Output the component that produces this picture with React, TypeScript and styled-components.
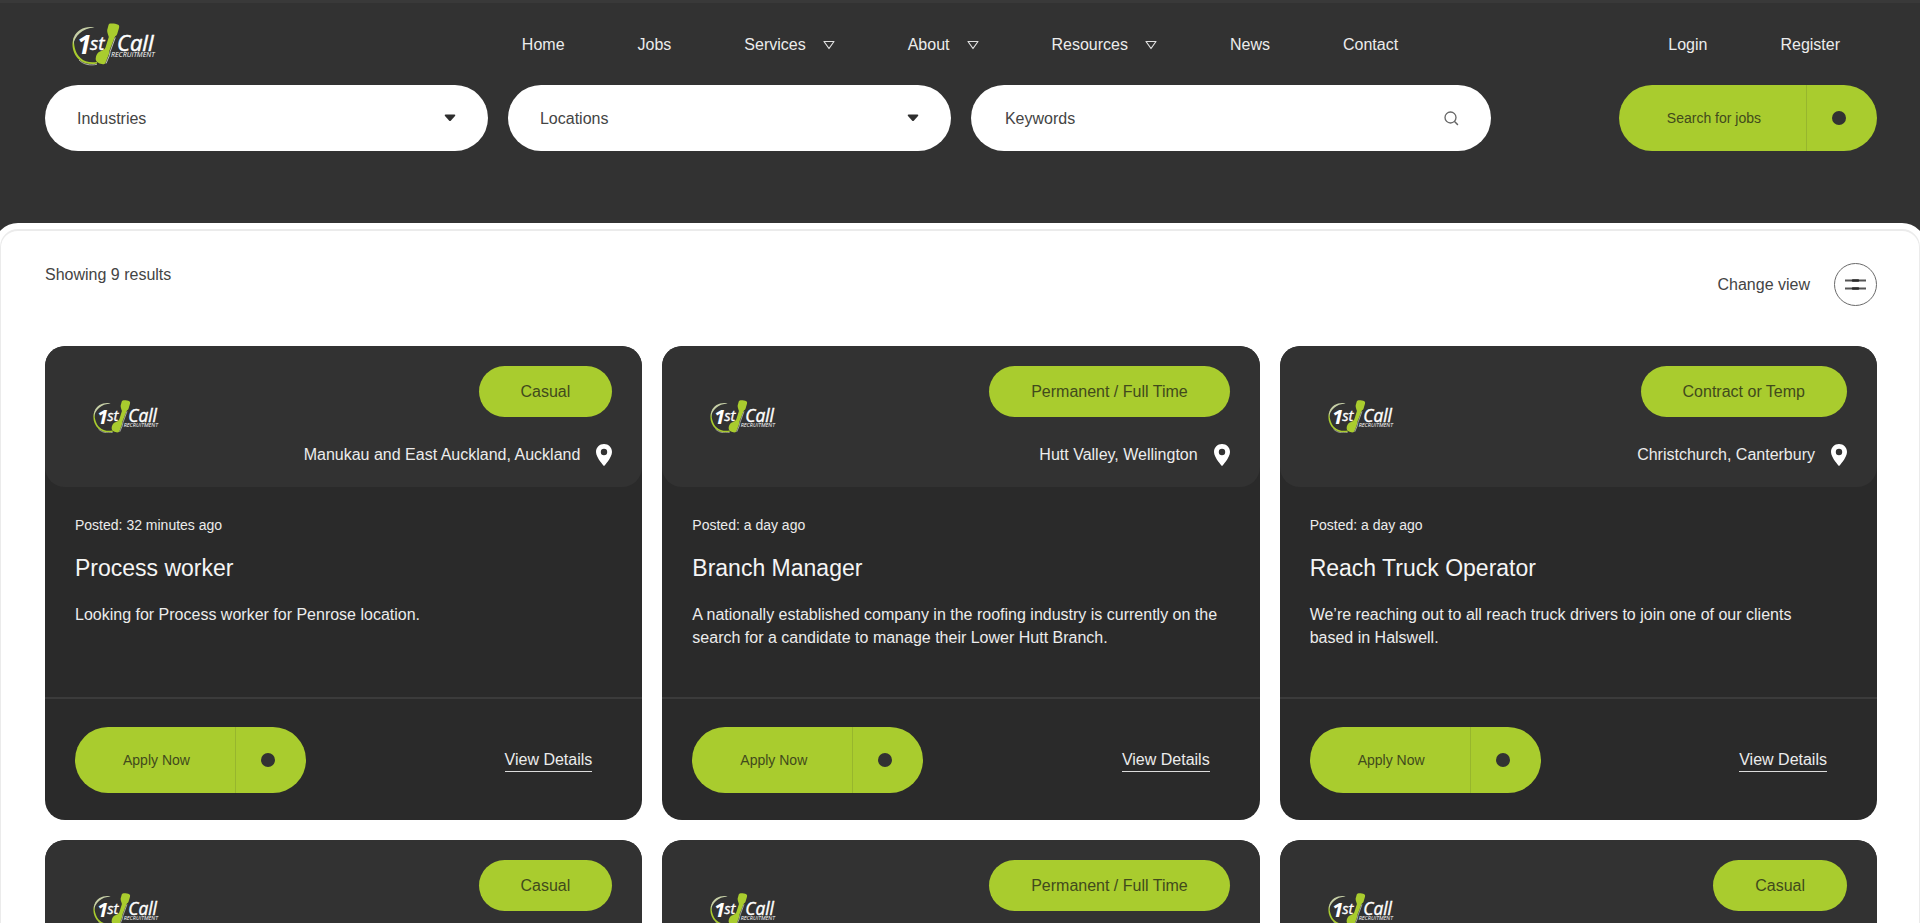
import React from "react";
import styled, { createGlobalStyle } from "styled-components";

const green = "#a9cc2e";
const dark = "#323232";
const darker = "#2a2a2a";
const sans = `"Liberation Sans", Arial, Helvetica, sans-serif`;

const GlobalStyle = createGlobalStyle`
  *, *::before, *::after { box-sizing: border-box; }
  body {
    margin: 0;
    background: ${dark};
    font-family: ${sans};
    font-size: 16px;
    line-height: 24px;
    color: #444;
  }
  button, input, select { font: inherit; }
  a { color: inherit; text-decoration: none; }
`;

const Page = styled.div`
  display: flex;
  flex-direction: column;
  height: 100vh;
  overflow: hidden;
  background: ${dark};
`;

const Header = styled.header`
  border-top: 3px solid #393939;
  padding-bottom: 78px;
`;

const TopBar = styled.div`
  display: grid;
  grid-template-columns: 1fr auto 1fr;
  align-items: center;
  height: 82px;
  padding: 2px 72px 0;
  color: #ececec;
`;

const LogoLink = styled.a`
  display: flex;
  justify-self: start;
  padding-bottom: 2px;
`;

const NavLinks = styled.nav`
  display: flex;
  align-items: center;
  gap: 73px;
`;

const AccountLinks = styled(NavLinks)`
  justify-self: end;
  padding-right: 8px;
`;

const NavLink = styled.a`
  display: flex;
  align-items: center;
  gap: 17px;
  white-space: nowrap;
`;

const SearchForm = styled.form`
  display: flex;
  gap: 128px;
  padding: 0 43px 0 45px;
`;

const Fields = styled.div`
  flex: 1;
  display: grid;
  grid-template-columns: 443fr 443fr 520fr;
  gap: 20px;
`;

const Field = styled.label`
  display: flex;
  align-items: center;
  height: 66px;
  padding-right: 32px;
  border-radius: 33px;
  background: #fff;
  color: #444;
`;

const Select = styled.select`
  flex: 1;
  min-width: 0;
  height: 100%;
  margin-right: -44px;
  padding: 2px 44px 0 32px;
  border: 0;
  outline: 0;
  appearance: none;
  background: transparent;
  color: inherit;
`;

const TextInput = styled.input`
  flex: 1;
  min-width: 0;
  height: 100%;
  padding: 2px 0 0 34px;
  border: 0;
  outline: 0;
  background: transparent;
  color: inherit;
  &::placeholder { color: #444; opacity: 1; }
`;

const CaretWrap = styled.svg`
  flex: none;
  pointer-events: none;
`;

const SplitButton = styled.button`
  display: flex;
  align-items: stretch;
  height: 66px;
  padding: 0;
  border: 0;
  border-radius: 33px;
  background: ${green};
  color: #414a1c;
  font-size: 14px;
  line-height: 20px;
  white-space: nowrap;
  cursor: pointer;
`;

const SplitLabel = styled.span`
  display: flex;
  align-items: center;
  padding: 0 45px 0 48px;
`;

const SplitDot = styled.span`
  display: flex;
  align-items: center;
  justify-content: center;
  width: 71px;
  padding-right: 6px;
  border-left: 1px solid #97b62d;
  &::before {
    content: "";
    width: 14px;
    height: 14px;
    border-radius: 50%;
    background: ${dark};
  }
`;

const Panel = styled.main`
  flex: 1 0 auto;
  padding: 32px 42px 32px 44px;
  border: 1px solid #ebebeb;
  border-top-width: 2px;
  border-radius: 18px;
  background: #fff;
  box-shadow: 0 0 0 6px #fff;
`;

const ResultsBar = styled.div`
  display: flex;
  justify-content: space-between;
  align-items: flex-start;
  margin-bottom: 40px;
`;

const ResultCount = styled.p`
  margin: 0;
`;

const ViewButton = styled.button`
  display: flex;
  align-items: center;
  gap: 24px;
  padding: 0;
  border: 0;
  background: transparent;
  color: inherit;
  cursor: pointer;
`;

const ViewIcon = styled.span`
  display: flex;
  align-items: center;
  justify-content: center;
  width: 43px;
  height: 43px;
  border: 1px solid #6a6a6a;
  border-radius: 50%;
`;

const CardGrid = styled.div`
  display: grid;
  grid-template-columns: repeat(3, minmax(0, 1fr));
  gap: 20px;
`;

const Card = styled.article`
  display: flex;
  flex-direction: column;
  min-height: 474px;
  border-radius: 20px;
  background: ${darker};
  color: #ececec;
  overflow: hidden;
`;

const CardHeader = styled.div`
  display: flex;
  justify-content: space-between;
  align-items: center;
  padding: 20px 30px 20px 48px;
  border-radius: 20px;
  background: ${dark};
`;

const CardMeta = styled.div`
  display: flex;
  flex-direction: column;
  align-items: flex-end;
  gap: 26px;
`;

const TypePill = styled.span`
  padding: 14px 42px 13px;
  border-radius: 26px;
  background: ${green};
  color: #414a1c;
`;

const Location = styled.span`
  display: flex;
  align-items: center;
  gap: 16px;
`;

const CardBody = styled.div`
  flex: 1;
  min-height: 210px;
  padding: 28px 40px 28px 30px;
`;

const Posted = styled.p`
  margin: 0 0 18px;
  font-size: 14px;
  line-height: 20px;
`;

const JobTitle = styled.h2`
  margin: 0 0 20px;
  font-size: 23px;
  font-weight: 400;
  line-height: 30px;
  color: #f5f5f5;
`;

const Summary = styled.p`
  margin: 0;
  line-height: 23px;
`;

const CardFooter = styled.div`
  display: flex;
  justify-content: space-between;
  align-items: center;
  padding: 28px 50px 27px 30px;
  border-top: 2px solid #3b3b3b;
`;

const DetailsLink = styled.a`
  border-bottom: 1px solid #dcdcdc;
  line-height: 22px;
`;

function Logo({ width }: { width: number }) {
  return (
    <svg width={width} viewBox="0 0 84 43" role="img" aria-label="1st Call Recruitment">
      <path d="M2.200 13.500C-1.200 21 .5 30.500 7 36.500C11.500 40.500 18 42 25 40.600L25 38.900C18.500 40 12.500 38.800 8.500 35C3 30 1.300 21.500 2.200 13.500Z" fill={green} />
      <path d="M22.500 4.400C14 2.600 5 6 1.800 14.500C1 17 1 19 1.300 22C2.500 13 10 5 22.500 4.400Z" fill="#c6cfa6" />
      <path d="M7 37C11.500 41.500 18 42.800 25 41.300" fill="none" stroke="#dfe3d2" strokeWidth=".7" />
      <path d="M38 .6C40 .1 44 .6 46.200 1.700C47.400 2.400 47.400 3.600 47 5L45.200 11C44.800 12.500 43.300 12.800 42.700 14.200L37.500 27.500C37 29 37.200 30.500 36.600 32L33.500 39.800C32.700 41.600 30.500 41.500 28.500 40.800C26 40 23.500 38.500 23.700 35.500C24 32 25.500 29.300 28.500 28.200C31 27.300 32.500 26.800 33.500 24.500L36.800 14C36 11 35 9.500 35.200 7L36.400 2.500C36.700 1.400 37 .9 38 .6Z" fill={green} />
      <path d="M43.300 14.500L38.200 28.500L37.400 32.500L34 40.500" fill="none" stroke="#e4e9d8" strokeWidth=".8" />
      <g fill="#fff" stroke="#fff" fontFamily='"Open Sans", "Noto Sans", sans-serif' fontStyle="italic">
        <text x="5" y="31" fontSize="26" fontWeight="700" strokeWidth="0">1</text>
        <text x="18" y="27" fontSize="19" strokeWidth="0.4">st</text>
        <text x="45" y="28" fontSize="22" strokeWidth="0.5">Call</text>
        <text x="39" y="34" fontSize="7" strokeWidth="0">RECRUITMENT</text>
      </g>
    </svg>
  );
}

const OutlineCaret = () => (
  <svg width="12" height="10" viewBox="0 0 12 10" aria-hidden="true">
    <path d="M1 1.500H11L6 8.500Z" fill="none" stroke="#e0e0e0" strokeWidth="1.200" strokeLinejoin="round" />
  </svg>
);

const Caret = () => (
  <CaretWrap width="12" height="8" viewBox="0 0 12 8" aria-hidden="true">
    <path d="M1.500 .5H10.500Q12 .6 11 1.900L7 6.400Q6 7.500 5 6.400L1 1.900Q0 .6 1.500 .5Z" fill="#2e2e2e" />
  </CaretWrap>
);

const SearchIcon = () => (
  <svg width="15" height="15" viewBox="0 0 15 15" aria-hidden="true">
    <circle cx="6.500" cy="6.500" r="5.500" fill="none" stroke="#666" strokeWidth="1.300" />
    <path d="M10.800 10.800L13.500 13.500" stroke="#666" strokeWidth="1.500" strokeLinecap="round" />
  </svg>
);

const Pin = () => (
  <svg width="16" height="22" viewBox="0 0 16 22" aria-hidden="true">
    <path fillRule="evenodd" d="M8 0C3.500 0 0 3.400 0 7.900C0 13.500 8 22 8 22S16 13.500 16 7.900C16 3.400 12.500 0 8 0ZM8 11.200A3.200 3.200 0 1 1 8 4.800A3.200 3.200 0 0 1 8 11.200Z" fill="#fff" />
  </svg>
);

const FilterIcon = () => (
  <svg width="21" height="11" viewBox="0 0 21 11" aria-hidden="true">
    <path d="M0 1.500H21M0 9.500H21" stroke="#555" strokeWidth="2" />
    <path d="M8 1.500H13M8 9.500H13" stroke="#2a2a2a" strokeWidth="2.600" strokeLinecap="round" />
  </svg>
);

const navItems = [
  { label: "Home" },
  { label: "Jobs" },
  { label: "Services", menu: true },
  { label: "About", menu: true },
  { label: "Resources", menu: true },
  { label: "News" },
  { label: "Contact" },
];

interface Job {
  type: string;
  location?: string;
  posted?: string;
  title?: string;
  summary?: string;
}

const jobs: Job[] = [
  {
    type: "Casual",
    location: "Manukau and East Auckland, Auckland",
    posted: "32 minutes ago",
    title: "Process worker",
    summary: "Looking for Process worker for Penrose location.",
  },
  {
    type: "Permanent / Full Time",
    location: "Hutt Valley, Wellington",
    posted: "a day ago",
    title: "Branch Manager",
    summary:
      "A nationally established company in the roofing industry is currently on the search for a candidate to manage their Lower Hutt Branch.",
  },
  {
    type: "Contract or Temp",
    location: "Christchurch, Canterbury",
    posted: "a day ago",
    title: "Reach Truck Operator",
    summary: "We’re reaching out to all reach truck drivers to join one of our clients based in Halswell.",
  },
  { type: "Casual" },
  { type: "Permanent / Full Time" },
  { type: "Casual" },
];

function JobCard({ job }: { job: Job }) {
  return (
    <Card>
      <CardHeader>
        <Logo width={66} />
        <CardMeta>
          <TypePill>{job.type}</TypePill>
          <Location>
            {job.location}
            <Pin />
          </Location>
        </CardMeta>
      </CardHeader>
      {job.title && (
        <>
          <CardBody>
            <Posted>Posted: {job.posted}</Posted>
            <JobTitle>{job.title}</JobTitle>
            <Summary>{job.summary}</Summary>
          </CardBody>
          <CardFooter>
            <SplitButton type="button">
              <SplitLabel>Apply Now</SplitLabel>
              <SplitDot />
            </SplitButton>
            <DetailsLink href="#">View Details</DetailsLink>
          </CardFooter>
        </>
      )}
    </Card>
  );
}

export default function App() {
  return (
    <Page>
      <GlobalStyle />
      <Header>
        <TopBar>
          <LogoLink href="#">
            <Logo width={84} />
          </LogoLink>
          <NavLinks>
            {navItems.map((item) => (
              <NavLink href="#" key={item.label}>
                {item.label}
                {item.menu && <OutlineCaret />}
              </NavLink>
            ))}
          </NavLinks>
          <AccountLinks>
            <NavLink href="#">Login</NavLink>
            <NavLink href="#">Register</NavLink>
          </AccountLinks>
        </TopBar>
        <SearchForm onSubmit={(e) => e.preventDefault()}>
          <Fields>
            <Field>
              <Select aria-label="Industries" defaultValue="">
                <option value="">Industries</option>
              </Select>
              <Caret />
            </Field>
            <Field>
              <Select aria-label="Locations" defaultValue="">
                <option value="">Locations</option>
              </Select>
              <Caret />
            </Field>
            <Field>
              <TextInput type="text" placeholder="Keywords" aria-label="Keywords" />
              <SearchIcon />
            </Field>
          </Fields>
          <SplitButton type="submit">
            <SplitLabel>Search for jobs</SplitLabel>
            <SplitDot />
          </SplitButton>
        </SearchForm>
      </Header>
      <Panel>
        <ResultsBar>
          <ResultCount>Showing 9 results</ResultCount>
          <ViewButton type="button">
            Change view
            <ViewIcon>
              <FilterIcon />
            </ViewIcon>
          </ViewButton>
        </ResultsBar>
        <CardGrid>
          {jobs.map((job, i) => (
            <JobCard job={job} key={i} />
          ))}
        </CardGrid>
      </Panel>
    </Page>
  );
}
